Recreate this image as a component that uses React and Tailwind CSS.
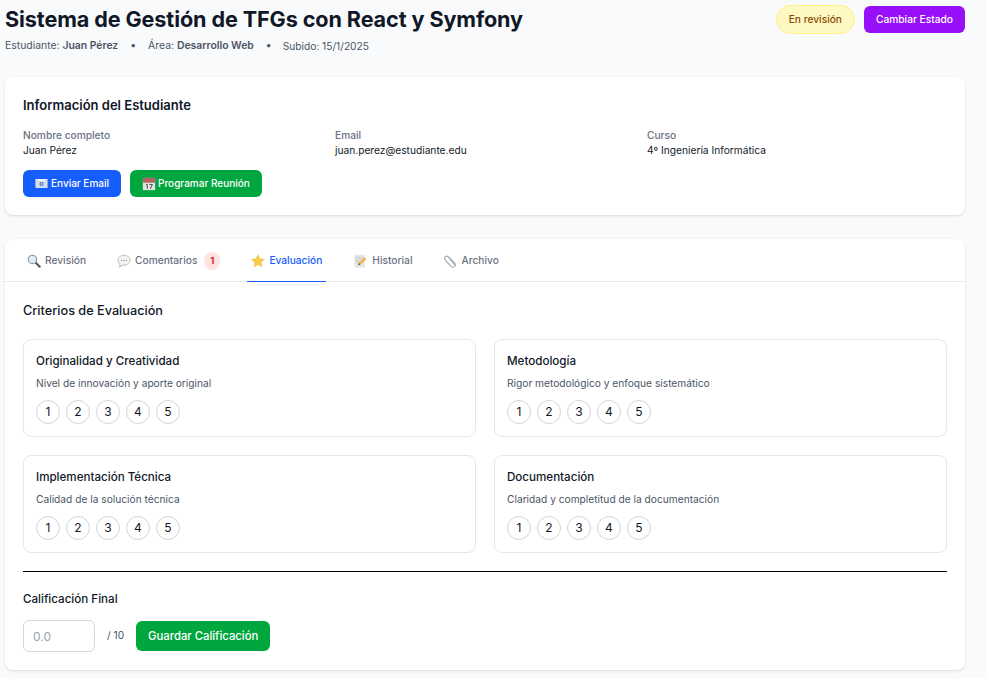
const Mail = () => (
  <svg width="13" height="13" viewBox="0 0 16 16" className="shrink-0">
    <rect x="0.5" y="2.5" width="15" height="11" fill="#d9dfe6" />
    <path d="M.5 2.5 8 8l7.5-5.500" fill="#eef1f4" stroke="#aab4bf" strokeWidth=".6" />
    <circle cx="8" cy="8.500" r="2.600" fill="#4a86c9" />
    <circle cx="8" cy="8.500" r="1" fill="#dfe8f2" />
  </svg>
);

const Calendar = () => (
  <svg width="14" height="14" viewBox="0 0 16 16" className="shrink-0">
    <rect x="1" y="1" width="14" height="14" fill="#e4e4e4" />
    <rect x="1" y="1" width="14" height="5.500" fill="#b9615c" />
    <rect x="3.500" y="0.500" width="1.200" height="3" fill="#7d7d7d" />
    <rect x="11.300" y="0.500" width="1.200" height="3" fill="#7d7d7d" />
    <path d="M4.600 8.500h1.400v5M8.500 8.500h3.400L9.500 13.500" fill="none" stroke="#444" strokeWidth="1.100" />
  </svg>
);

const Search = () => (
  <svg width="14" height="14" viewBox="0 0 16 16" className="shrink-0">
    <path d="m9.500 9.500 5 5" stroke="#555" strokeWidth="2.400" strokeLinecap="round" />
    <circle cx="6.200" cy="6.200" r="4.800" fill="#e3edf5" stroke="#8f979e" strokeWidth="1.300" />
  </svg>
);

const Bubble = () => (
  <svg width="14" height="14" viewBox="0 0 16 16" className="shrink-0">
    <path d="M8 1.500c3.900 0 7 2.500 7 5.700s-3.100 5.600-7 5.600c-.6 0-1.100 0-1.700-.2L2.900 15c.4-1 .6-2 .5-3.100C1.900 10.900 1 9.200 1 7.200 1 4 4.100 1.500 8 1.500Z" fill="#f4f5f3" stroke="#a9aeaa" strokeWidth=".9" />
    <circle cx="5.400" cy="7.200" r=".7" fill="#777" />
    <circle cx="8" cy="7.200" r=".7" fill="#777" />
    <circle cx="10.600" cy="7.200" r=".7" fill="#777" />
  </svg>
);

const Star = () => (
  <svg width="14" height="14" viewBox="0 0 16 16" className="shrink-0">
    <path d="m8 .8 2.200 4.700 5.100.6-3.800 3.500 1 5.100L8 12.200l-4.500 2.500 1-5.100L.7 6.100l5.100-.6Z" fill="#fbcb4b" stroke="#f0b13a" strokeWidth=".5" />
  </svg>
);

const Memo = () => (
  <svg width="15" height="14" viewBox="0 0 17 16" className="shrink-0">
    <rect x="1.500" y="1" width="12" height="14.500" fill="#e5e5e3" />
    <path d="M3 4h9M3 6.500h9M3 9h5" stroke="#b5b5b2" strokeWidth=".7" />
    <path d="m6 12.800.7-2.500 6.500-6.500 1.900 1.900-6.500 6.400Z" fill="#f0b23c" />
    <path d="m6 12.800.7-2.500 1.800 1.800Z" fill="#5b4a35" />
  </svg>
);

const Clip = () => (
  <svg width="14" height="14" viewBox="0 0 16 16" className="shrink-0">
    <path d="M13.600 12.300 6 3.400c-.9-1.100-2.400-1.200-3.400-.4-1 .8-1.100 2.300-.3 3.300l6.500 7.600c1.300 1.400 3 1.500 4.200.5 1.200-1 1.300-2.600.3-3.900L7.400 4.300" fill="none" stroke="#a3a9ae" strokeWidth="1.300" strokeLinecap="round" />
  </svg>
);

const tabs = [
  { label: "Revisión", icon: <Search /> },
  { label: "Comentarios", icon: <Bubble />, badge: 1 },
  { label: "Evaluación", icon: <Star />, active: true },
  { label: "Historial", icon: <Memo /> },
  { label: "Archivo", icon: <Clip /> },
];

const criterios = [
  { title: "Originalidad y Creatividad", desc: "Nivel de innovación y aporte original" },
  { title: "Metodología", desc: "Rigor metodológico y enfoque sistemático" },
  { title: "Implementación Técnica", desc: "Calidad de la solución técnica" },
  { title: "Documentación", desc: "Claridad y completitud de la documentación" },
];

const Info = ({ label, value }) => (
  <div>
    <p className="text-[10.2px] leading-[15px] font-medium text-gray-500">{label}</p>
    <p className="text-[10.2px] leading-[15px] text-gray-900">{value}</p>
  </div>
);

export default function App() {
  return (
    <div className="min-h-screen bg-gray-50 pl-[5px] pr-[22px] font-['Inter',sans-serif]">
      {/* Header */}
      <div className="flex justify-between items-start pt-[3px] mb-[23px]">
        <div>
          <h1 className="text-[21.6px] tracking-[-0.1px] leading-8 font-bold text-gray-900">
            Sistema de Gestión de TFGs con React y Symfony
          </h1>
          <div className="flex items-center gap-3 mt-[3px] text-[10.4px] leading-[16px] text-gray-600">
            <span>
              Estudiante: <b className="font-semibold">Juan Pérez</b>
            </span>
            <span>•</span>
            <span>
              Área: <b className="font-semibold">Desarrollo Web</b>
            </span>
            <span>•</span>
            <span className="-ml-[1px] text-[10.2px]">Subido: 15/1/2025</span>
          </div>
        </div>
        <div className="flex items-center gap-[9px] pt-[2px]">
          <span className="flex items-center h-[29px] px-3 rounded-full bg-yellow-100 border border-yellow-200 text-[10.2px] font-medium text-yellow-800">
            En revisión
          </span>
          <button className="h-[27px] px-3 rounded-md bg-purple-600 text-white text-[10.2px] font-medium">
            Cambiar Estado
          </button>
        </div>
      </div>

      {/* Estudiante */}
      <div className="bg-white rounded-lg shadow-sm p-[18px] mb-[24px]">
        <h2 className="text-[13px] leading-5 font-semibold text-gray-900 mb-[13px]">
          Información del Estudiante
        </h2>
        <div className="grid grid-cols-3 gap-3 mb-[12px]">
          <Info label="Nombre completo" value="Juan Pérez" />
          <Info label="Email" value="juan.perez@estudiante.edu" />
          <Info label="Curso" value="4º Ingeniería Informática" />
        </div>
        <div className="flex gap-[9px]">
          <button className="flex items-center gap-[3px] h-[27px] px-3 rounded-md bg-blue-600 text-white text-[10px] font-medium">
            <Mail /> Enviar Email
          </button>
          <button className="flex items-center gap-[2px] h-[27px] px-3 rounded-md bg-green-600 text-white text-[10px] font-medium">
            <Calendar /> Programar Reunión
          </button>
        </div>
      </div>

      {/* Tabs */}
      <div className="bg-white rounded-lg shadow-sm">
        <div className="flex gap-[23px] px-[18px] h-[43px] border-b border-gray-200">
          {tabs.map((tab) => (
            <div
              key={tab.label}
              className={`flex items-center gap-1 px-1 pt-[2px] h-[43px] border-b text-[10.2px] font-medium ${
                tab.active ? "border-blue-600 text-blue-600" : "border-transparent text-gray-500"
              }`}
            >
              {tab.icon}
              {tab.label}
              {tab.badge && (
                <span className="flex items-center justify-center w-4 h-[18px] ml-[3px] rounded-full bg-red-100 text-red-700 text-[9px] font-semibold">
                  {tab.badge}
                </span>
              )}
            </div>
          ))}
        </div>

        <div className="p-[18px]">
          <h3 className="text-[12.7px] leading-5 font-medium text-gray-900 mt-[1px] mb-[18px]">
            Criterios de Evaluación
          </h3>
          <div className="grid grid-cols-2 gap-[18px]">
            {criterios.map((c) => (
              <div key={c.title} className="border border-gray-200 rounded-lg px-3 pt-3 h-[98px]">
                <h4 className="text-[11.6px] leading-[18px] font-medium text-gray-900">{c.title}</h4>
                <p className="text-[10.2px] leading-4 text-gray-600 mt-[5px] mb-[9px]">{c.desc}</p>
                <div className="flex gap-[6px]">
                  {[1, 2, 3, 4, 5].map((n) => (
                    <button
                      key={n}
                      className="w-6 h-6 rounded-full border border-gray-300 text-xs text-gray-900 bg-white"
                    >
                      {n}
                    </button>
                  ))}
                </div>
              </div>
            ))}
          </div>

          <div className="border-t border-black mt-[18px] pt-[18px]">
            <p className="text-[11.6px] leading-[18px] font-medium text-gray-900 mb-[12px]">
              Calificación Final
            </p>
            <div className="flex items-center gap-3">
              <input
                placeholder="0.0"
                className="w-[72px] h-8 px-[9px] rounded-md border border-gray-300 text-xs bg-white placeholder:text-gray-400"
              />
              <span className="text-[10.2px] text-gray-600">/ 10</span>
              <button className="h-[30px] px-3 rounded-md bg-green-600 text-white text-[11.3px] font-medium">
                Guardar Calificación
              </button>
            </div>
          </div>
        </div>
      </div>
    </div>
  );
}
